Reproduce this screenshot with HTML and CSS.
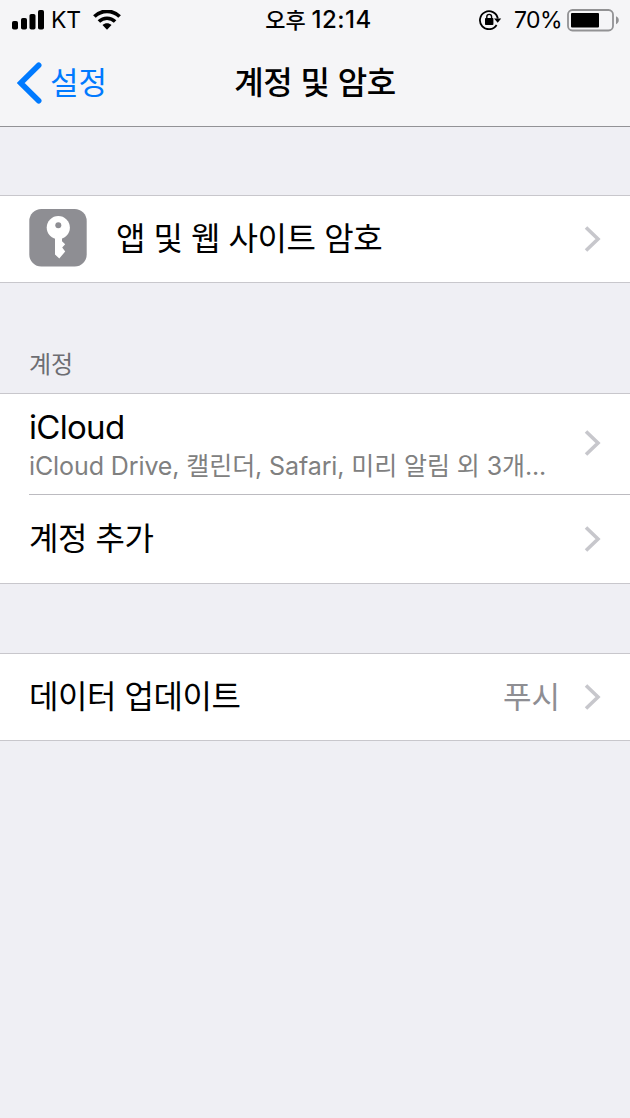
FILE: index.html
```html
<!DOCTYPE html>
<html lang="ko">
<head>
  <meta charset="UTF-8">
  <title>계정 및 암호</title>
  <link rel="stylesheet" href="styles.css">
</head>
<body>
  <header class="header">
    <div class="status-bar">
      <div class="status-left">
        <svg class="signal" width="33" height="20" viewBox="0 0 33 20">
          <rect x="0" y="11" width="6" height="8.5" rx="1.8"/>
          <rect x="9" y="8" width="6" height="11.5" rx="1.8"/>
          <rect x="17.5" y="4" width="6" height="15.5" rx="1.8"/>
          <rect x="26" y="0" width="6" height="19.5" rx="1.8"/>
        </svg>
        <span class="carrier">KT</span>
        <svg class="wifi" width="28" height="20" viewBox="0 0 28 20">
          <path d="M1.4 6.5C8.6-.4 19.4-.4 26.6 6.5" fill="none" stroke="#000" stroke-width="3.8"/>
          <path d="M5.9 11.5C10.5 7.1 17.5 7.1 22.1 11.5" fill="none" stroke="#000" stroke-width="3.6"/>
          <path d="M9.5 15.1C12.2 12.7 15.8 12.7 18.5 15.1L14 19.8Z"/>
        </svg>
      </div>
      <div class="clock">오후 <span class="time">12:14</span></div>
      <div class="status-right">
        <svg class="rotation-lock" width="23" height="20" viewBox="0 0 23 20">
          <path d="M17.6 15A9 9 0 1 1 18.8 8.5" fill="none" stroke="#000" stroke-width="1.8"/>
          <path d="M15 8.6H22.2L18.7 12.7Z"/>
          <rect x="6" y="8" width="8.4" height="7" rx=".8"/>
          <path d="M7.8 9V6.8A2.4 2.4 0 0 1 12.6 6.8V9" fill="none" stroke="#000" stroke-width="1.4"/>
        </svg>
        <span class="percent">70%</span>
        <svg class="battery" width="53" height="23" viewBox="0 0 53 23">
          <rect x="1" y="1" width="45" height="20.5" rx="4.5" fill="none" stroke="#929294" stroke-width="1.8"/>
          <rect x="4" y="4" width="28" height="14.5" rx="1"/>
          <path d="M49 7.3C52.7 8.5 52.7 14 49 15.2Z" fill="#929294"/>
        </svg>
      </div>
    </div>
    <nav class="nav-bar">
      <a class="back">
        <svg width="25" height="42" viewBox="0 0 25 42">
          <path d="M21.7 3.2L3.7 21L21.7 38.8" fill="none" stroke="#007aff" stroke-width="5.6" stroke-linecap="round"/>
        </svg>
        <span>설정</span>
      </a>
      <h1 class="title">계정 및 암호</h1>
    </nav>
  </header>

  <main>
    <section class="group passwords">
      <div class="row">
        <svg class="key-icon" width="58" height="58" viewBox="0 0 58 58">
          <rect x=".3" width="57.4" height="57.4" rx="12" fill="#8e8e93"/>
          <circle cx="29.3" cy="18.6" r="11.6" fill="#fff"/>
          <path d="M26 28H33V32.3L36.2 35.3L33.2 38.6L36.2 42.4L30.3 49.6L26 45.6Z" fill="#fff"/>
          <circle cx="29.3" cy="16.3" r="3" fill="#8e8e93"/>
        </svg>
        <span class="label">앱 및 웹 사이트 암호</span>
        <svg class="chevron" width="17" height="26" viewBox="0 0 17 26"><path d="M2 1.5L14 13L2 24.5"/></svg>
      </div>
    </section>

    <h2 class="section-title">계정</h2>
    <section class="group accounts">
      <div class="row icloud">
        <div class="account">
          <div class="label latin">iCloud</div>
          <div class="detail">iCloud Drive, 캘린더, Safari, 미리 알림 외 3개...</div>
        </div>
        <svg class="chevron" width="17" height="26" viewBox="0 0 17 26"><path d="M2 1.5L14 13L2 24.5"/></svg>
      </div>
      <div class="row">
        <span class="label">계정 추가</span>
        <svg class="chevron" width="17" height="26" viewBox="0 0 17 26"><path d="M2 1.5L14 13L2 24.5"/></svg>
      </div>
    </section>

    <section class="group fetch">
      <div class="row">
        <span class="label">데이터 업데이트</span>
        <span class="value">푸시</span>
        <svg class="chevron" width="17" height="26" viewBox="0 0 17 26"><path d="M2 1.5L14 13L2 24.5"/></svg>
      </div>
    </section>
  </main>
</body>
</html>
```
FILE: styles.css
```css
* {
  box-sizing: border-box;
}

body {
  margin: 0;
  min-height: 1118px;
  background: #efeff4;
  color: #000;
  font-family: Inter, "Noto Sans CJK KR", sans-serif;
}

svg {
  display: block;
  flex: none;
}

.header {
  height: 127px;
  background: #f5f5f7;
  border-bottom: 1px solid #929296;
}

/* Status bar */
.status-bar {
  display: grid;
  grid-template-columns: 1fr auto 1fr;
  align-items: center;
  height: 40px;
  padding: 0 10px 0 12px;
  font-size: 23px;
  line-height: 40px;
}
.status-left,
.status-right {
  display: flex;
  align-items: center;
}
.status-right {
  justify-content: flex-end;
}
.carrier {
  margin: 0 12px 0 6px;
  letter-spacing: -0.3px;
}
.clock {
  padding-left: 5px;
  font-size: 22px;
  font-weight: 500;
}
.time {
  font-size: 24px;
  letter-spacing: 0.5px;
}
.percent {
  margin: 0 5px 0 13px;
  letter-spacing: -0.6px;
}
.rotation-lock {
  margin-right: -1px;
}

/* Navigation bar */
.nav-bar {
  display: grid;
  grid-template-columns: 1fr auto 1fr;
  align-items: center;
  height: 84px;
  padding: 0 17px;
}
.back {
  display: flex;
  align-items: center;
  gap: 8px;
  color: #007aff;
  font-size: 31px;
}
.back svg {
  margin-top: 2px;
}
.back span,
.title {
  padding-bottom: 4px;
}
.title {
  margin: 0;
  font-size: 32px;
  font-weight: 500;
  letter-spacing: -0.4px;
}

/* Table groups */
.group {
  background: #fff;
  border-top: 1px solid #c8c7cc;
  border-bottom: 1px solid #c8c7cc;
}
.passwords {
  margin-top: 68px;
}
.fetch {
  margin-top: 69px;
}
.row {
  display: flex;
  align-items: center;
  height: 86px;
  padding-right: 29px;
  margin-left: 29px;
}
.accounts .row {
  height: 88px;
}
.accounts .icloud {
  height: 101px;
  border-bottom: 1px solid #bcbbc0;
}
.label {
  font-size: 32px;
  letter-spacing: -0.45px;
  line-height: 40px;
}
.latin {
  font-size: 33px;
  letter-spacing: -0.7px;
}
.key-icon {
  margin-right: 29px;
  margin-bottom: 3px;
}
.value {
  margin-left: auto;
  margin-right: 24px;
  padding-bottom: 6px;
  color: #8e8e93;
  font-size: 31px;
}
.chevron {
  margin-left: auto;
  fill: none;
  stroke: #c7c7cc;
  stroke-width: 3.6;
}
.icloud .chevron {
  margin-bottom: 2px;
}
.value + .chevron {
  margin-left: 0;
}
.account {
  padding-top: 4px;
  white-space: nowrap;
}
.detail {
  color: #808080;
  font-size: 25px;
  letter-spacing: -0.1px;
  line-height: 39px;
}
.section-title {
  margin: 0;
  padding: 64px 29px 0;
  height: 110px;
  color: #6d6d72;
  font-size: 24px;
  font-weight: 400;
  line-height: 36px;
}
```
